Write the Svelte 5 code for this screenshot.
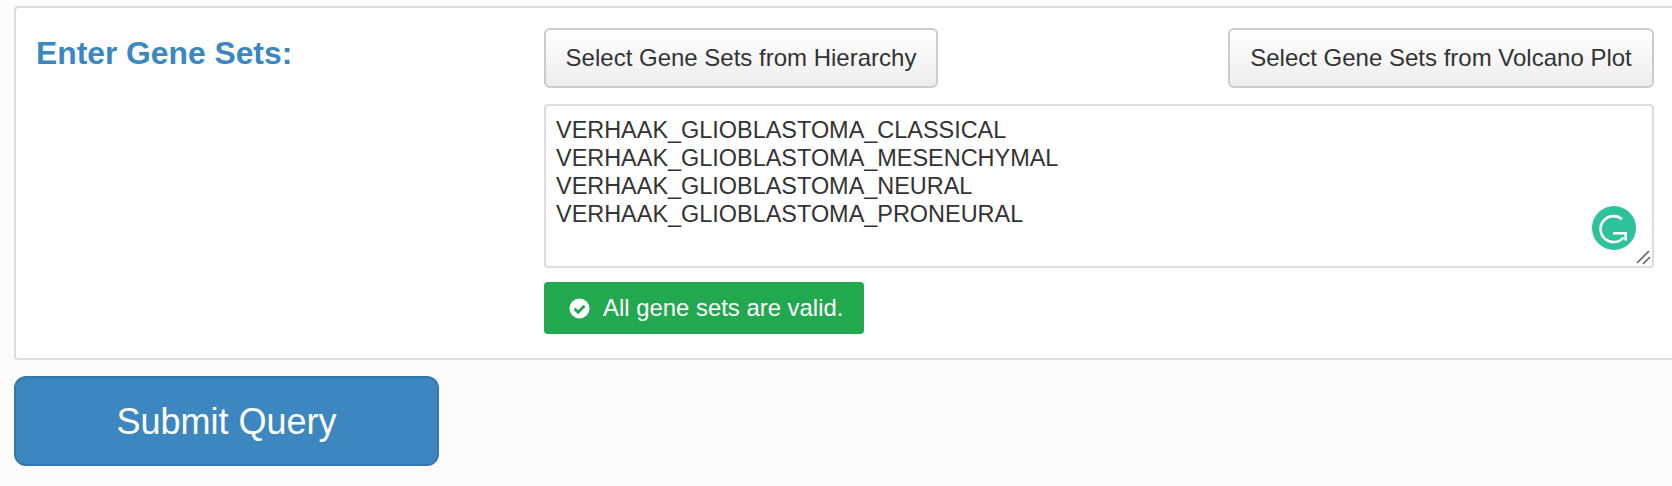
<script>
    const geneSets = [
        "VERHAAK_GLIOBLASTOMA_CLASSICAL",
        "VERHAAK_GLIOBLASTOMA_MESENCHYMAL",
        "VERHAAK_GLIOBLASTOMA_NEURAL",
        "VERHAAK_GLIOBLASTOMA_PRONEURAL",
    ];
    let text = geneSets.join("\n");
</script>

<main class="page">
    <section class="panel">
        <h3 class="title">Enter Gene Sets:</h3>
        <div class="fields">
            <div class="actions">
                <button class="btn hierarchy">Select Gene Sets from Hierarchy</button>
                <button class="btn volcano">Select Gene Sets from Volcano Plot</button>
            </div>

            <div class="editor">
                <textarea bind:value={text} spellcheck="false"></textarea>
                <!-- grammarly badge sits on top of the textarea -->
                <svg class="badge" viewBox="0 0 44 44" aria-hidden="true">
                    <circle cx="22" cy="22" r="22" fill="#2dc29c" />
                    <path d="M30 13.2A13 13 0 1 0 31.5 31.5" fill="none" stroke="#fff" stroke-width="2.6" />
                    <path d="M21 27.3H33.7V34.5" fill="none" stroke="#fff" stroke-width="2.6" />
                </svg>
                <svg class="grip" viewBox="0 0 15 15" aria-hidden="true">
                    <path d="M1 13L13 1M7 14L14 7" fill="none" stroke="#666" stroke-width="1.7" />
                </svg>
            </div>

            <div class="status">
                <svg class="check" viewBox="0 0 22 22" aria-hidden="true">
                    <circle cx="11" cy="11" r="10.5" fill="#fff" />
                    <path d="M5.8 11.2l3.7 3.7 6.8-6.8" fill="none" stroke="#22a84f" stroke-width="3" />
                </svg>
                <span>All gene sets are valid.</span>
            </div>
        </div>
    </section>

    <button class="submit">Submit Query</button>
</main>

<style>
    :global(body) {
        background: #fcfcfc;
        overflow: hidden;
    }

    .page {
        height: 486px;
        padding: 6px 0 0 14px;
        box-sizing: border-box;
        font-family: "Liberation Sans", Arial, sans-serif;
        color: #333;
    }

    .panel {
        display: flex;
        height: 354px;
        box-sizing: border-box;
        padding: 20px 16px 0 20px;
        background: #fff;
        border: 2px solid #ddd;
        border-right: none;
        border-radius: 4px 0 0 4px;
    }

    .title {
        width: 508px;
        margin: 0;
        padding-top: 8px;
        color: #3a87c1;
        font-size: 31.8px;
        line-height: 34px;
        font-weight: 700;
    }

    .fields {
        width: 1110px;
    }

    .actions {
        display: flex;
        justify-content: space-between;
    }

    .btn {
        height: 60px;
        padding: 0;
        font-family: inherit;
        font-size: 24px;
        color: #333;
        background: linear-gradient(#fff, #ededed);
        border: 2px solid #ccc;
        border-radius: 6px;
    }

    .hierarchy {
        width: 394px;
    }

    .volcano {
        width: 426px;
    }

    .editor {
        position: relative;
        height: 164px;
        margin-top: 16px;
    }

    textarea {
        display: block;
        width: 100%;
        height: 100%;
        box-sizing: border-box;
        padding: 9.5px 10px;
        font-family: inherit;
        font-size: 23.45px;
        line-height: 28px;
        color: #333;
        background: #fff;
        border: 2px solid #ddd;
        border-radius: 4px;
        outline: none;
        resize: none;
    }

    .badge {
        position: absolute;
        right: 18px;
        bottom: 18px;
        width: 44px;
        height: 44px;
    }

    .grip {
        position: absolute;
        right: 3px;
        bottom: 3px;
        width: 15px;
        height: 15px;
    }

    .status {
        display: inline-flex;
        align-items: center;
        gap: 13px;
        height: 52px;
        width: 320px;
        box-sizing: border-box;
        margin-top: 14px;
        padding-left: 25px;
        color: #fff;
        font-size: 23.9px;
        background: #22a84f;
        border-radius: 4px;
    }

    .check {
        width: 21px;
        height: 21px;
    }

    .submit {
        display: block;
        width: 425px;
        height: 90px;
        margin-top: 16px;
        padding-top: 3px;
        font-family: inherit;
        font-size: 36px;
        color: #fff;
        background: #3d87c0;
        border: 2px solid #3478ad;
        border-radius: 12px;
    }
</style>
